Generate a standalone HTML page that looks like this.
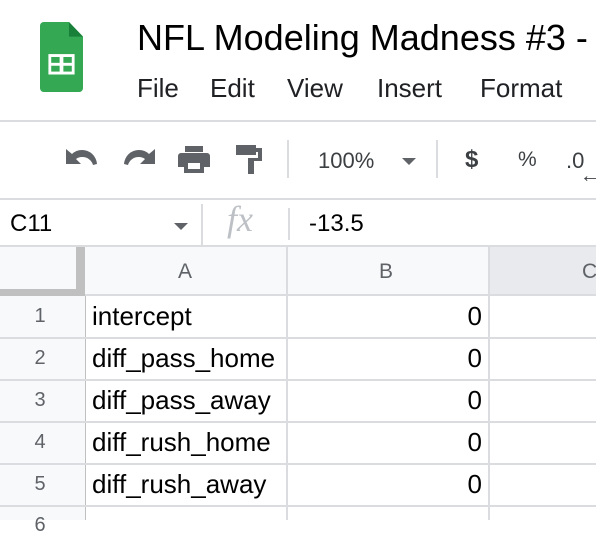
<!DOCTYPE html><html><head><style>
body{margin:0;width:596px;height:520px;overflow:hidden;background:#fff;font-family:"Liberation Sans",Arial,sans-serif;position:relative}
.a{position:absolute;white-space:nowrap}
.hl{position:absolute;left:0;width:596px;height:2px;background:#dadce0}
.c{position:absolute;color:#000;font-size:26px}
.r{position:absolute;color:#000;font-size:26px;right:114px}
.m{position:absolute;top:73px;font-size:26px;color:#202124}
.rh{position:absolute;left:0;width:80px;text-align:center;color:#5f6368;font-size:20px}
</style></head><body>
<svg class="a" style="left:40px;top:22px" width="43" height="70" viewBox="0 0 46 72" preserveAspectRatio="none">
<path d="M4 0H31L46 15V68a4 4 0 0 1-4 4H4a4 4 0 0 1-4-4V4a4 4 0 0 1 4-4z" fill="#34a853"/>
<path d="M31 0L46 15H31z" fill="#188038"/>
<rect x="9" y="33" width="28" height="21" fill="#fff"/>
<rect x="12" y="36" width="9" height="6" fill="#34a853"/><rect x="25" y="36" width="9" height="6" fill="#34a853"/>
<rect x="12" y="45" width="9" height="6" fill="#34a853"/><rect x="25" y="45" width="9" height="6" fill="#34a853"/>
</svg>
<div class="a" style="left:137px;top:17px;font-size:36px;color:#000">NFL Modeling Madness #3 -</div>
<div class="m" style="left:137px">File</div><div class="m" style="left:210px">Edit</div><div class="m" style="left:287px">View</div><div class="m" style="left:377px">Insert</div><div class="m" style="left:480px">Format</div>
<div class="hl" style="top:120px"></div>
<svg class="a" style="left:0;top:140px" width="596" height="40">
<g fill="#5f6368">
<path d="M82 10a14 14 0 0 0-10 4l-6-5v15h15l-5-5a10 10 0 0 1 6-2 11 11 0 0 1 11 8l4-1a15 15 0 0 0-15-14z"/>
<path d="M139 10a14 14 0 0 1 10 4l6-5v15h-15l5-5a10 10 0 0 0-6-2 11 11 0 0 0-11 8l-4-1a15 15 0 0 1 15-14z"/>
<rect x="185" y="6" width="18" height="6"/><path d="M181 13h26a3 3 0 0 1 3 3v11h-6v6h-20v-6h-6v-11a3 3 0 0 1 3-3z"/><rect x="188" y="23" width="12" height="6" fill="#fff"/>
<rect x="236" y="5" width="20" height="10"/><rect x="256" y="8" width="6" height="4"/><rect x="258" y="8" width="4" height="13"/><rect x="248" y="18" width="14" height="3"/><rect x="248" y="18" width="6" height="16"/>
<path d="M402 18h14l-7 7z"/>
</g>
<rect x="287" y="0" width="2" height="38" fill="#dadce0"/><rect x="436" y="0" width="2" height="38" fill="#dadce0"/>
</svg>
<div class="a" style="left:318px;top:148px;font-size:22px;color:#3c4043">100%</div>
<div class="a" style="left:465px;top:146px;font-size:24px;color:#3c4043;font-weight:bold">$</div>
<div class="a" style="left:518px;top:148px;font-size:21px;color:#3c4043">%</div>
<div class="a" style="left:566px;top:148px;font-size:22px;color:#3c4043">.0</div>
<div class="a" style="left:580px;top:165px;font-size:20px;color:#3c4043">←</div>
<div class="hl" style="top:198px"></div>
<div class="a" style="left:10px;top:210px;font-size:24px;color:#000">C11</div>
<svg class="a" style="left:172px;top:220px" width="20" height="12"><path d="M2 3h14l-7 7z" fill="#5f6368"/></svg>
<div class="a" style="left:201px;top:204px;width:2px;height:42px;background:#dadce0"></div>
<div class="a" style="left:227px;top:198px;font-size:36px;font-style:italic;color:#bdc1c6;font-family:'Liberation Serif',serif">fx</div>
<div class="a" style="left:288px;top:208px;width:2px;height:32px;background:#dadce0"></div>
<div class="a" style="left:309px;top:210px;font-size:24px;color:#000">-13.5</div>
<div class="hl" style="top:245px"></div>
<div class="a" style="left:0;top:247px;width:596px;height:49px;background:#f8f9fa"></div>
<div class="a" style="left:489px;top:247px;width:107px;height:49px;background:#e8eaed"></div>
<div class="a" style="left:0;top:296px;width:85px;height:224px;background:#f8f9fa"></div>
<div class="a" style="left:0;top:289px;width:85px;height:7px;background:#c0c0c0"></div>
<div class="a" style="left:76px;top:247px;width:9px;height:49px;background:#c0c0c0"></div>
<div class="a" style="left:85px;top:296px;width:1px;height:224px;background:#c0c0c0"></div>
<div class="a" style="left:286px;top:247px;width:2px;height:273px;background:#dadce0"></div>
<div class="a" style="left:488px;top:247px;width:2px;height:273px;background:#dadce0"></div>
<div class="a" style="left:85px;top:294px;width:511px;height:2px;background:#dadce0"></div>
<div class="a" style="left:178px;top:260px;font-size:21px;color:#5f6368">A</div>
<div class="a" style="left:379px;top:260px;font-size:21px;color:#5f6368">B</div>
<div class="a" style="left:582px;top:260px;font-size:21px;color:#5f6368">C</div>
<div class="hl" style="top:337px"></div><div class="hl" style="top:379px"></div><div class="hl" style="top:421px"></div><div class="hl" style="top:463px"></div><div class="hl" style="top:505px"></div>
<div class="rh" style="top:305px">1</div><div class="rh" style="top:347px">2</div><div class="rh" style="top:389px">3</div><div class="rh" style="top:431px">4</div><div class="rh" style="top:473px">5</div><div class="rh" style="top:514px">6</div>
<div class="c" style="left:92px;top:301px">intercept</div>
<div class="c" style="left:92px;top:343px">diff_pass_home</div>
<div class="c" style="left:92px;top:385px">diff_pass_away</div>
<div class="c" style="left:92px;top:427px">diff_rush_home</div>
<div class="c" style="left:92px;top:469px">diff_rush_away</div>
<div class="r" style="top:301px">0</div><div class="r" style="top:343px">0</div><div class="r" style="top:385px">0</div><div class="r" style="top:427px">0</div><div class="r" style="top:469px">0</div>
</body></html>
